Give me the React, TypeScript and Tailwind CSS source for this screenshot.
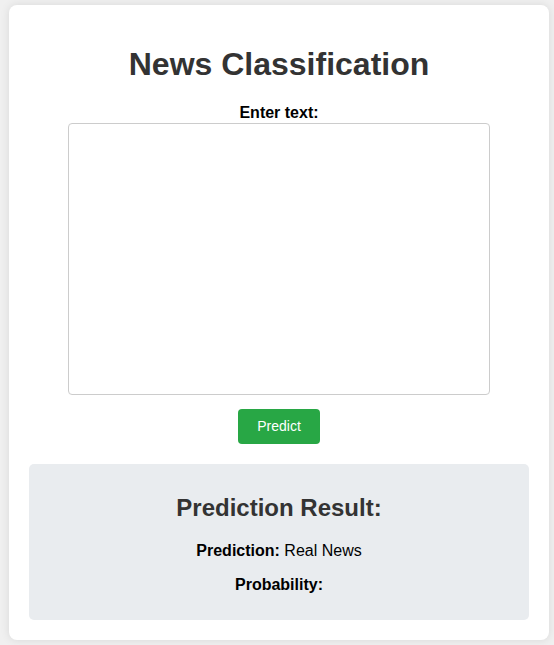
export default function App() {
  return (
    <div className="min-h-[645px] bg-[#f0f0f0] pt-[5px] pl-[9px] font-['Liberation_Sans',Arial,sans-serif]">
      <div className="w-[540px] rounded-[8px] bg-white px-[20px] pt-[20px] pb-[20px] shadow-[0_0_10px_rgba(0,0,0,0.1)]">
        <h1 className="mt-[21px] mb-[21px] text-center text-[32px] font-bold leading-[37px] text-[#333]">
          News Classification
        </h1>

        <form className="flex flex-col items-center" onSubmit={(e) => e.preventDefault()}>
          <label htmlFor="text" className="text-[16px] font-bold leading-[18px] text-black">
            Enter text:
          </label>
          <textarea
            id="text"
            className="mt-[1px] h-[272px] w-[422px] resize-none rounded-[4px] border border-[#ccc] bg-white p-[10px] text-[16px] outline-none"
          />
          <button
            type="submit"
            className="mt-[14px] h-[35px] w-[82px] rounded-[4px] bg-[#28a745] text-[14px] text-white"
          >
            Predict
          </button>
        </form>

        <div className="mt-[20px] rounded-[5px] bg-[#e9ecef] p-[10px] text-center">
          <h2 className="mt-[20px] mb-[20px] text-[24px] font-bold leading-[28px] text-[#333]">
            Prediction Result:
          </h2>
          <p className="text-[16px] leading-[18px] text-black">
            <strong>Prediction:</strong> Real News
          </p>
          <p className="mt-[16px] mb-[16px] text-[16px] leading-[18px] text-black">
            <strong>Probability:</strong>
          </p>
        </div>
      </div>
    </div>
  )
}
